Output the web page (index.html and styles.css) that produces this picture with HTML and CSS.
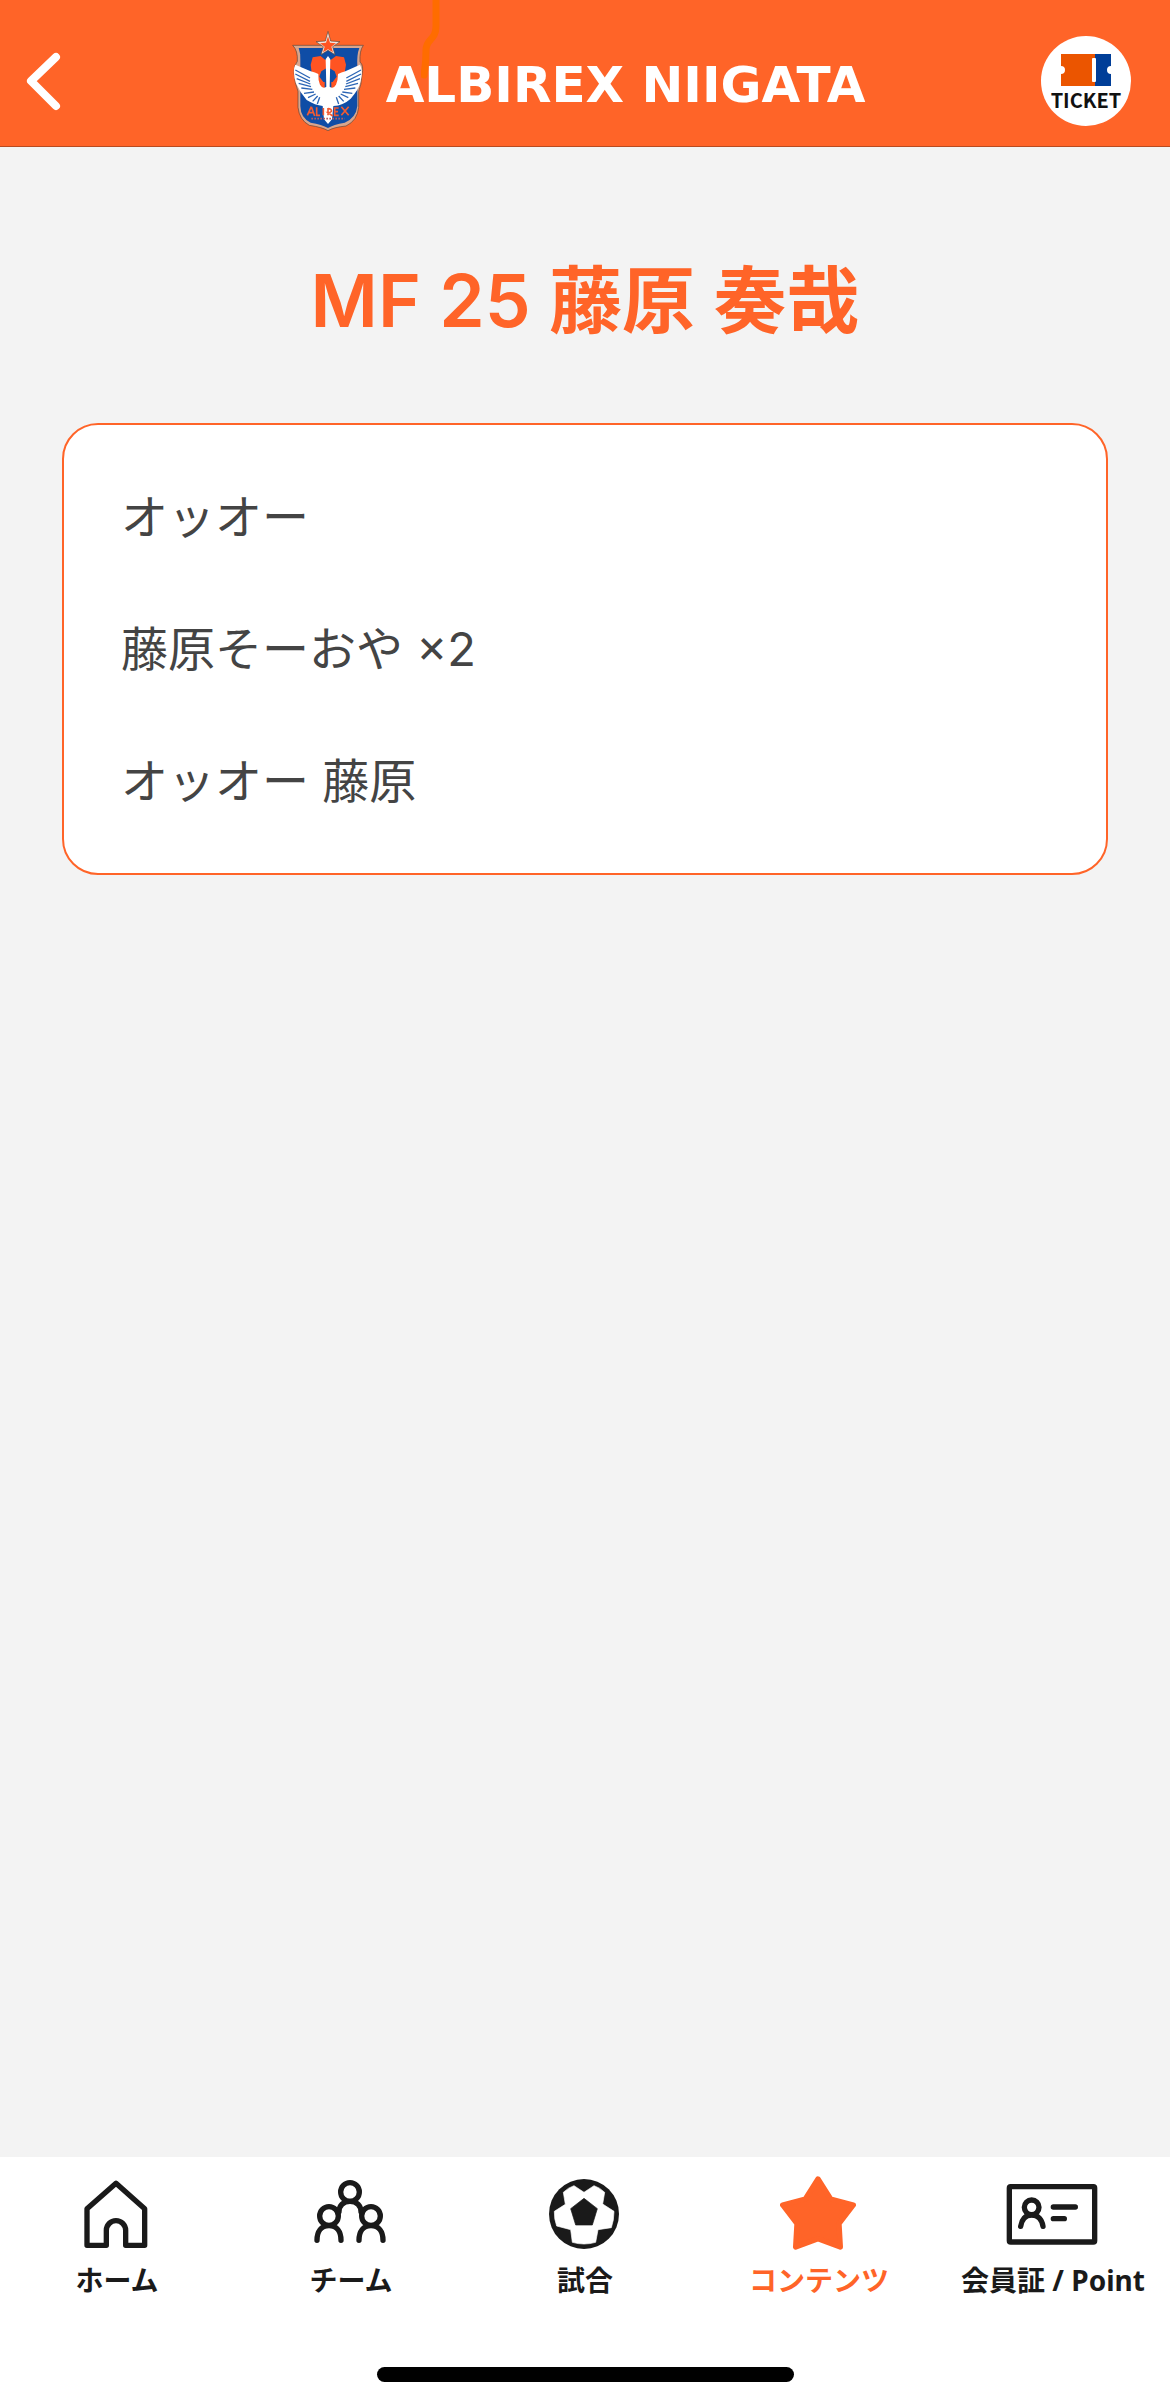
FILE: index.html
```html
<!DOCTYPE html>
<html lang="ja">
<head>
<meta charset="utf-8">
<meta name="viewport" content="width=device-width, initial-scale=1">
<title>MF 25 藤原 奏哉</title>
<link rel="stylesheet" href="styles.css">
</head>
<body>
<header class="header">
  <button class="back" type="button" aria-label="戻る">
    <svg width="36" height="60" viewBox="0 0 36 60" fill="none" stroke="#fff" stroke-width="8" stroke-linecap="round" stroke-linejoin="round"><path d="M30 6 5 30l25 25"/></svg>
  </button>
  <div class="brand">
    <svg class="crest" width="74" height="102" viewBox="36 30 222 306" aria-hidden="true">
      <path d="M38 76H250Q238 92 240 126Q252 136 246 164Q244 196 236 214V262Q232 302 198 318Q160 322 144 332Q128 322 88 316Q58 300 54 262V214Q44 190 42 156Q42 136 52 124Q54 92 38 76Z" fill="#d9a58c" stroke="#5e4438" stroke-width="2"/>
      <path d="M56 84H238Q230 104 232 140V258Q228 294 194 308Q160 314 144 324Q126 314 92 308Q62 294 61 258V120Q62 100 56 84Z" fill="#0f4da6"/>
      <path d="M98 112 122 108 136 120H152L168 108 192 112 198 134 190 182 166 208H122L98 182 92 134Z" fill="#ff5422"/>
      <path d="M144 142 164 154 170 170 158 186H130L118 170 124 154ZM134 186h20v20h-20z" fill="#0f4da6"/>
      <path d="M144 108 137 118 139 200Q128 208 120 194Q114 180 115 162Q106 158 92 154L46 134Q36 152 48 190Q60 218 80 240Q106 256 128 258L132 298 144 312 156 298 160 258Q190 256 212 236Q236 210 242 184Q250 152 240 134L196 154Q184 158 174 162Q174 180 168 194Q160 208 149 200L151 118Z" fill="#fff"/>
      <path d="M46 150 90 174M46 162 90 184M50 176 91 192M56 190 93 200M64 204 97 208M72 220 102 216M84 233 107 222M98 244 113 228M112 252 119 232M243 150 199 174M243 162 199 184M240 176 198 192M234 190 196 200M226 204 192 208M217 220 187 216M205 233 182 222M191 244 176 228M176 252 169 232" stroke="#2d66b5" stroke-width="4" fill="none"/>
      <path d="M94 260 82 286M94 260 104 288M86 278h14M110 262v24h10M130 264v22M144 264v22M144 266q12 0 10 8-2 4-10 4l14 10M176 264h-12v22h12M164 275h10M184 260l22 26M206 260l-22 26" stroke="#f25b32" stroke-width="5" fill="none"/>
      <path d="M94 296H194" stroke="#b65c60" stroke-width="5" stroke-dasharray="5 4"/>
      <path d="M144 34 152 63 180 65 158 80 165 104 144 91 123 104 130 80 108 65 136 63Z" fill="#f4e7df" stroke="#5e4438" stroke-width="2"/>
      <path d="M144 49 150 68 168 70 154 80 159 97 144 88 129 97 134 80 120 70 138 68Z" fill="#ff5422"/>
    </svg>
    <span class="wordmark">ALBIREX NIIGATA</span>
    <svg class="ribbon" width="24" height="82" viewBox="0 0 24 82" fill="none" stroke="#ff6c00" stroke-width="7" stroke-linecap="round" aria-hidden="true"><path d="M15 -4V26C15 41 5 38 5 50C5 64 4 66 3 75"/></svg>
  </div>
  <a class="ticket" href="#">
    <svg width="50" height="32" viewBox="0 0 50 32" aria-hidden="true">
      <path d="M0 0H34V32H0V20A4 4 0 0 0 0 12Z" fill="#eb5500"/>
      <path d="M34 0H50V12A4 4 0 0 0 50 20V32H34Z" fill="#003e98"/>
      <rect x="31" y="4" width="4" height="24" rx="1" fill="#fff"/>
    </svg>
    <span>TICKET</span>
  </a>
</header>

<main class="main">
  <h1 class="title">MF 25 藤原 奏哉</h1>
  <section class="card">
    <p>オッオー</p>
    <p>藤原そーおや ×2</p>
    <p>オッオー 藤原</p>
  </section>
</main>

<footer class="footer">
  <nav class="tabs">
    <a class="tab" href="#">
      <svg width="74" height="74" viewBox="120 107 222 222" fill="none" stroke="#1a1a1a" stroke-width="16" stroke-linejoin="round"><path d="M228 129 314 205V315H257V270a29 29 0 0 0-58 0V315H141V205Z"/></svg>
      <span>ホーム</span>
    </a>
    <a class="tab" href="#">
      <svg width="74" height="74" viewBox="822 107 222 222" fill="none" stroke="#1a1a1a" stroke-width="16" stroke-linecap="round"><circle cx="930" cy="155" r="28"/><circle cx="867" cy="227" r="28"/><circle cx="993" cy="227" r="28"/><path d="M897 214C897 196 910 183 930 183S963 196 963 214M831 300C831 274 844 256 867 256S903 274 903 300M957 300C957 274 970 256 993 256S1029 274 1029 300"/></svg>
      <span>チーム</span>
    </a>
    <a class="tab" href="#">
      <svg width="74" height="74" viewBox="144 107 222 222"><circle cx="252" cy="221" r="105" fill="#1a1a1a"/><path d="M222 136 252 156 282 136Q300 142 314 156L308 191 342 213Q342 240 334 262L294 268 287 306Q252 316 217 306L212 268 170 257Q162 235 163 213L196 192 190 156Q204 142 222 136Z" fill="#fff" stroke="#fff" stroke-width="2"/><path d="M252 174 292 205 277 254H227L212 205Z" fill="#1a1a1a" stroke="#1a1a1a" stroke-width="2"/></svg>
      <span>試合</span>
    </a>
    <a class="tab tab-active" href="#" aria-current="page">
      <svg width="78" height="74" viewBox="840 107 234 222"><path d="M954 116 992 176 1060 194 1017 250 1021 320 954 295 887 320 891 250 848 194 916 176Z" fill="#ff6428" stroke="#ff6428" stroke-width="16" stroke-linejoin="round"/></svg>
      <span>コンテンツ</span>
    </a>
    <a class="tab" href="#">
      <svg width="94" height="74" viewBox="228 107 282 222" fill="none" stroke="#1a1a1a" stroke-width="16" stroke-linecap="round"><rect x="238" y="139" width="256" height="166" rx="4"/><circle cx="305" cy="201" r="22"/><path d="M272 258C275 238 286 224 305 224S336 238 339 258M370 200H436M370 235H403"/></svg>
      <span>会員証 / Point</span>
    </a>
  </nav>
  <div class="home-indicator"></div>
</footer>
</body>
</html>
```
FILE: styles.css
```css
* {
  box-sizing: border-box;
}

body {
  display: flex;
  flex-direction: column;
  min-height: 100vh;
  margin: 0;
  background: #f3f3f3;
  color: #444;
  font-family: Inter, "Noto Sans CJK JP", sans-serif;
}

a {
  color: inherit;
  text-decoration: none;
}

svg {
  display: block;
  flex: none;
}

.header {
  display: grid;
  grid-template-columns: 1fr auto 1fr;
  align-items: center;
  padding: 15px 39px 0 26px;
  height: 147px;
  border-bottom: 1px solid #b84a20;
  background: #ff6428;
  position: relative;
}

.back {
  justify-self: start;
  padding: 0;
  border: 0;
  background: none;
}

.brand {
  display: flex;
  align-items: center;
  gap: 20px;
}

.wordmark {
  color: #fff;
  font: bold 50px/60px "DejaVu Sans", sans-serif;
  padding-top: 8px;
  white-space: nowrap;
}

.ribbon {
  position: absolute;
  top: 0;
  left: 421px;
}

.ticket {
  display: flex;
  flex-direction: column;
  align-items: center;
  justify-self: end;
  width: 90px;
  height: 90px;
  padding-top: 18px;
  border-radius: 50%;
  background: #fff;
  color: #111;
  font: bold 20px/28px "Noto Sans CJK JP", sans-serif;
}

.main {
  flex: 1;
  padding: 94px 62px 64px;
}

.title {
  margin: 0 0 62px;
  color: #ff6428;
  font-size: 73px;
  font-weight: 600;
  line-height: 120px;
  text-align: center;
}

.card {
  padding: 26px 57px;
  border: 2px solid #ff6428;
  border-radius: 36px;
  background: #fff;
}

.card p {
  margin: 0;
  font-size: 47px;
  line-height: 132px;
}

.footer {
  position: sticky;
  bottom: 0;
  padding: 19px 0 24px;
  background: #fff;
}

.tabs {
  display: grid;
  grid-template-columns: repeat(5, 1fr);
}

.tab {
  display: flex;
  flex-direction: column;
  align-items: center;
  gap: 10px;
  color: #1a1a1a;
  font: bold 28px/40px "Noto Sans", "Noto Sans CJK JP", sans-serif;
  white-space: nowrap;
}

.tab-active {
  color: #ff6428;
}

.home-indicator {
  width: 417px;
  height: 15px;
  margin: 67px auto 0;
  border-radius: 8px;
  background: #000;
}
```
